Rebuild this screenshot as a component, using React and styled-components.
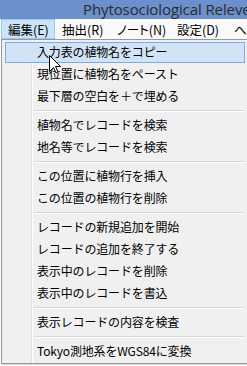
import React from "react";
import styled, { createGlobalStyle } from "styled-components";

const GlobalStyle = createGlobalStyle`
  html, body {
    margin: 0;
    padding: 0;
    background: #ffffff;
  }
  #root {
    width: 247px;
    height: 366px;
    overflow: hidden;
  }
`;

const Window = styled.div`
  position: relative;
  display: flex;
  flex-direction: column;
  width: 247px;
  height: 366px;
  overflow: hidden;
  font-family: "Noto Sans CJK JP", "Noto Sans", sans-serif;
`;

const TitleBar = styled.div`
  height: 19px;
  flex-shrink: 0;
  background: #6c8fcd;
  display: flex;
  align-items: center;
  padding-left: 83px;
  white-space: nowrap;
  overflow: hidden;
`;

const Title = styled.span`
  font-family: "Open Sans", "Noto Sans", sans-serif;
  font-size: 15px;
  letter-spacing: -0.1px;
  color: #2b2b2b;
  line-height: 19px;
`;

const MenuBar = styled.div`
  height: 20px;
  flex-shrink: 0;
  background: #f9f9fa;
  display: flex;
  align-items: stretch;
  padding-left: 1px;
  white-space: nowrap;
  overflow: hidden;
`;

const MenuTitle = styled.div`
  display: flex;
  align-items: center;
  flex-shrink: 0;
  box-sizing: border-box;
  width: ${(p) => (p.$width ? `${p.$width}px` : "auto")};
  padding-left: 6px;
  font-size: 12.5px;
  font-feature-settings: "palt";
  letter-spacing: 0;
  color: #000;
  border: 1px solid ${(p) => (p.$open ? "#99c9ef" : "transparent")};
  background: ${(p) => (p.$open ? "#cce4f7" : "transparent")};
`;

const Content = styled.div`
  flex: 1;
  background: #ffffff;
`;

const Dropdown = styled.div`
  position: absolute;
  left: 1px;
  top: 39px;
  width: 243px;
  padding: 1px;
  background: #f0f0f0;
  border: 1px solid #979797;
  box-shadow: 1px 1px 1px rgba(0, 0, 0, 0.15);
  display: flex;
  flex-direction: column;
  background-image: linear-gradient(
    to right,
    transparent 29px,
    #e2e3e3 29px,
    #e2e3e3 30px,
    #ffffff 30px,
    #ffffff 31px,
    transparent 31px
  );
`;

const Item = styled.div`
  position: relative;
  height: 22px;
  display: flex;
  align-items: center;
  padding-left: 34px;
  font-size: 12px;
  letter-spacing: -0.15px;
  color: #000;
  white-space: nowrap;

  &::before {
    content: "";
    position: absolute;
    left: 2px;
    right: 1px;
    top: 1px;
    bottom: 0;
    border: 1px solid ${(p) => (p.$hover ? "#78aee5" : "transparent")};
    background: ${(p) => (p.$hover ? "#d1e3f5" : "transparent")};
  }
`;

const Label = styled.span`
  position: relative;
  line-height: 22px;
`;

const Separator = styled.div`
  height: 7px;
  display: flex;
  align-items: center;
  padding-left: 31px;
  padding-right: 1px;

  &::after {
    content: "";
    flex: 1;
    height: 0;
    border-top: 1px solid #d7d7d7;
    border-bottom: 1px solid #ffffff;
  }
`;

const Cursor = styled.svg`
  position: absolute;
  left: 49px;
  top: 55px;
`;

const groups = [
  ["入力表の植物名をコピー", "現位置に植物名をペースト", "最下層の空白を＋で埋める"],
  ["植物名でレコードを検索", "地名等でレコードを検索"],
  ["この位置に植物行を挿入", "この位置の植物行を削除"],
  [
    "レコードの新規追加を開始",
    "レコードの追加を終了する",
    "表示中のレコードを削除",
    "表示中のレコードを書込",
  ],
  ["表示レコードの内容を検査"],
  ["Tokyo測地系をWGS84に変換"],
];

const menus = [
  { label: "編集(E)", open: true, width: 54 },
  { label: "抽出(R)", width: 55 },
  { label: "ノート(N)", width: 60 },
  { label: "設定(D)", width: 57 },
  { label: "ヘルプ(H)" },
];

const App = () => {
  return (
    <Window>
      <GlobalStyle />
      <TitleBar>
        <Title>Phytosociological Releve</Title>
      </TitleBar>
      <MenuBar>
        {menus.map((m) => (
          <MenuTitle key={m.label} $open={m.open} $width={m.width}>
            {m.label}
          </MenuTitle>
        ))}
      </MenuBar>
      <Content />
      <Dropdown>
        {groups.map((items, gi) => (
          <React.Fragment key={gi}>
            {gi > 0 && <Separator />}
            {items.map((text) => (
              <Item key={text} $hover={text === "入力表の植物名をコピー"}>
                <Label>{text}</Label>
              </Item>
            ))}
          </React.Fragment>
        ))}
      </Dropdown>
      <Cursor width="12" height="19" viewBox="0 0 12 19">
        <path
          d="M0.5 0.5 L0.5 16.5 L4.5 12.5 L7 18 L9 17 L6.5 11.5 L11.5 11.5 Z"
          fill="#ffffff"
          stroke="#000000"
          strokeWidth="1"
        />
      </Cursor>
    </Window>
  );
};

export default App;
